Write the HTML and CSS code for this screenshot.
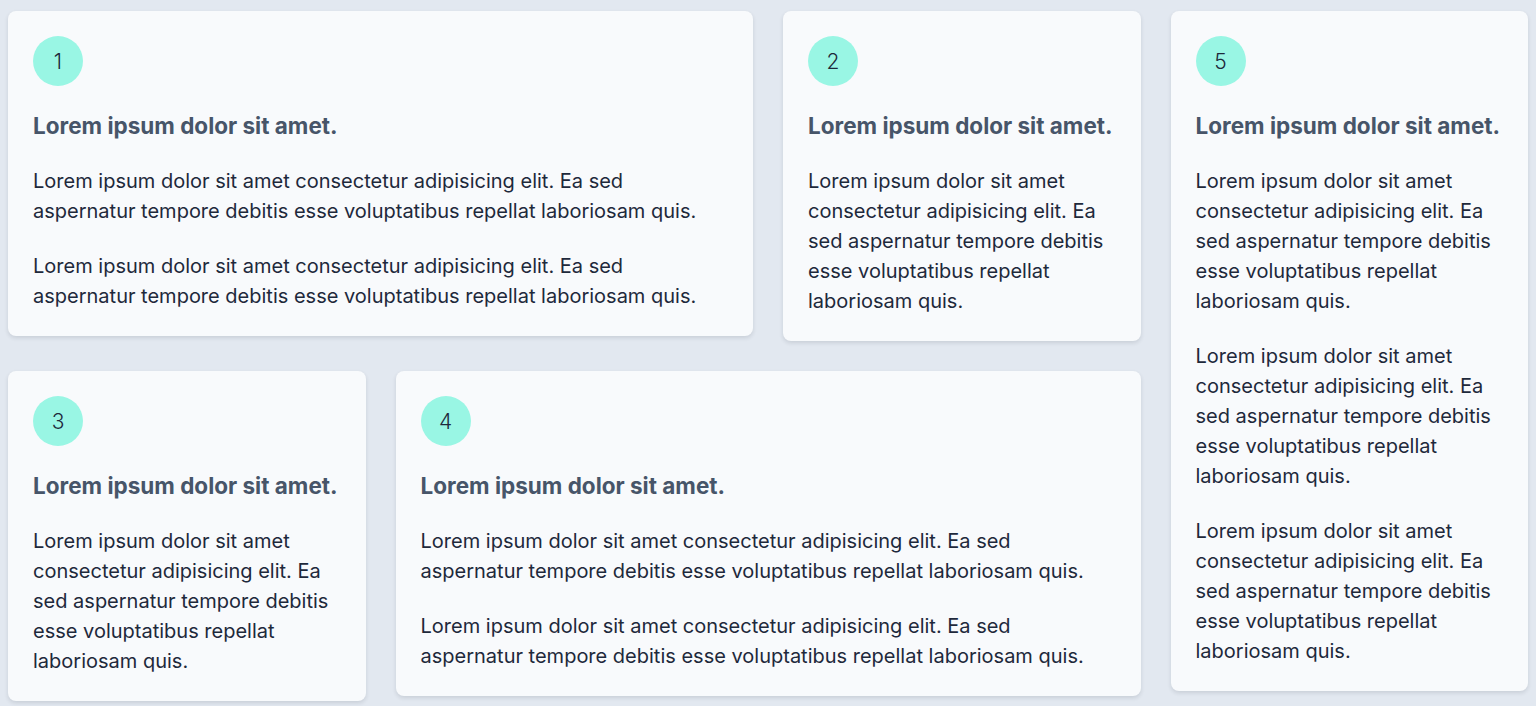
FILE: index.html
```html
<!DOCTYPE html>
<html lang="en">
<head>
<meta charset="utf-8">
<title>Cards</title>
<link rel="stylesheet" href="styles.css">
</head>
<body>
<main class="grid">
  <article class="card card-1">
    <div class="num">1</div>
    <h2 class="title">Lorem ipsum dolor sit amet.</h2>
    <p>Lorem ipsum dolor sit amet consectetur adipisicing elit. Ea sed aspernatur tempore debitis esse voluptatibus repellat laboriosam quis.</p>
    <p>Lorem ipsum dolor sit amet consectetur adipisicing elit. Ea sed aspernatur tempore debitis esse voluptatibus repellat laboriosam quis.</p>
  </article>
  <article class="card card-2">
    <div class="num">2</div>
    <h2 class="title">Lorem ipsum dolor sit amet.</h2>
    <p>Lorem ipsum dolor sit amet consectetur adipisicing elit. Ea sed aspernatur tempore debitis esse voluptatibus repellat laboriosam quis.</p>
  </article>
  <article class="card card-5">
    <div class="num">5</div>
    <h2 class="title">Lorem ipsum dolor sit amet.</h2>
    <p>Lorem ipsum dolor sit amet consectetur adipisicing elit. Ea sed aspernatur tempore debitis esse voluptatibus repellat laboriosam quis.</p>
    <p>Lorem ipsum dolor sit amet consectetur adipisicing elit. Ea sed aspernatur tempore debitis esse voluptatibus repellat laboriosam quis.</p>
    <p>Lorem ipsum dolor sit amet consectetur adipisicing elit. Ea sed aspernatur tempore debitis esse voluptatibus repellat laboriosam quis.</p>
  </article>
  <article class="card card-3">
    <div class="num">3</div>
    <h2 class="title">Lorem ipsum dolor sit amet.</h2>
    <p>Lorem ipsum dolor sit amet consectetur adipisicing elit. Ea sed aspernatur tempore debitis esse voluptatibus repellat laboriosam quis.</p>
  </article>
  <article class="card card-4">
    <div class="num">4</div>
    <h2 class="title">Lorem ipsum dolor sit amet.</h2>
    <p>Lorem ipsum dolor sit amet consectetur adipisicing elit. Ea sed aspernatur tempore debitis esse voluptatibus repellat laboriosam quis.</p>
    <p>Lorem ipsum dolor sit amet consectetur adipisicing elit. Ea sed aspernatur tempore debitis esse voluptatibus repellat laboriosam quis.</p>
  </article>
</main>
</body>
</html>
```
FILE: styles.css
```css
* { box-sizing: border-box; }
html, body { height: 100%; }
body {
  margin: 0;
  padding: 11px 8px 8px;
  background: #e2e8f0;
  font-family: Inter, "Noto Sans", sans-serif;
  color: #1e293b;
  overflow: hidden;
}
.grid {
  display: grid;
  grid-template-columns: repeat(4, 1fr);
  gap: 30px;
  align-items: start;
}
.card {
  background: #f8fafc;
  border-radius: 8px;
  padding: 25px;
  box-shadow: 0 2px 4px rgba(15, 23, 42, 0.12);
  display: flex;
  flex-direction: column;
  gap: 25px;
}
.card-1 { grid-column: 1 / 3; grid-row: 1; }
.card-2 { grid-column: 3; grid-row: 1; }
.card-5 { grid-column: 4; grid-row: 1 / 3; }
.card-3 { grid-column: 1; grid-row: 2; }
.card-4 { grid-column: 2 / 4; grid-row: 2; }
.num {
  width: 50px;
  height: 50px;
  border-radius: 50%;
  background: #99f6e4;
  display: flex;
  align-items: center;
  justify-content: center;
  font-size: 21px;
  font-weight: 300;
  color: #1e293b;
}
.title {
  margin: 0;
  font-size: 22.5px;
  line-height: 30px;
  font-weight: 700;
  color: #475569;
}
.card p {
  margin: 0;
  font-size: 20px;
  line-height: 30px;
}
```
